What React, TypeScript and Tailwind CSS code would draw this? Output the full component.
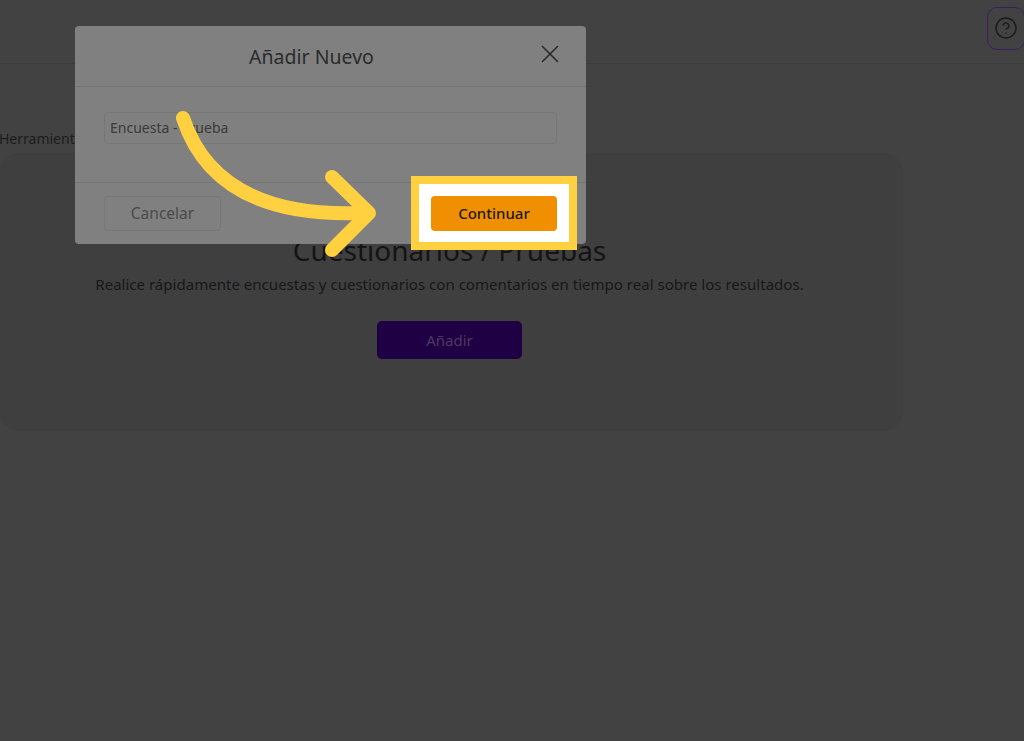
import { CircleHelp, X } from "lucide-react"

const fuente = "font-['Noto_Sans','Liberation_Sans',sans-serif]"

export default function App() {
  return (
    <div className={`relative h-[741px] w-[1024px] overflow-hidden bg-[#424242] ${fuente}`}>
      <header className="flex h-[64px] items-start justify-end border-b border-[#3c3c3c] pt-[7px]">
        <button className="-mr-px flex h-[43px] w-[38px] items-center justify-center rounded-[10px] border border-[#3c1f5a] pb-[2px] text-[#1c1c1c]">
          <CircleHelp size={24} strokeWidth={1.5} />
        </button>
      </header>

      <main className="pt-[65px]">
        <p className="-ml-px h-[24px] text-[14px] leading-[20px] text-[#1c1c1c]">Herramientas</p>
        <section className="flex h-[278px] w-[903px] flex-col items-center rounded-[20px] bg-[#3f3f3f] pr-[4px] pt-[77px]">
          <h2 className="text-[28px] leading-[40px] text-[#141414]">Cuestionarios / Pruebas</h2>
          <p className="mt-[4px] text-[15.05px] leading-[20px] text-[#171717]">
            Realice rápidamente encuestas y cuestionarios con comentarios en tiempo real sobre los resultados.
          </p>
          <button className="mt-[27px] h-[38px] w-[145px] rounded-[5px] bg-[#200044] text-[15px] text-[#4b3a5e]">Añadir</button>
        </section>
      </main>

      {/* modal */}
      <div className="absolute left-[75px] top-[26px] flex h-[218px] w-[511px] flex-col rounded-[4px] bg-[#808080]">
        <div className="relative flex h-[61px] items-center justify-center border-b border-[#767676] pr-[38px] pt-px">
          <h3 className="text-[19.5px] text-[#2b2b2b]">Añadir Nuevo</h3>
          <X size={30} strokeWidth={1.3} className="absolute right-[21px] top-[13px] text-[#2b2b2b]" />
        </div>
        <div className="flex h-[96px] items-start border-b border-[#767676] px-[29px] pt-[25px]">
          <div className="flex h-[32px] w-full items-center rounded-[4px] border border-[#767676] px-[5px] pb-[2px] text-[14px] text-[#3a3a3a]">
            Encuesta - Prueba
          </div>
        </div>
        <div className="flex flex-1 items-start justify-between px-[29px] pt-[13px]">
          <button className="h-[35px] w-[117px] rounded-[4px] border border-[#767676] text-[15.5px] text-[#4a4a4a]">Cancelar</button>
        </div>
      </div>

      {/* resaltado del botón */}
      <div className="absolute left-[411px] top-[176px] flex h-[74px] w-[166px] items-center justify-center border-[8px] border-[#ffd040] bg-white">
        <button className="h-[35px] w-[126px] rounded-[4px] bg-[#f09000] pt-px text-[15px] font-medium text-[#1a1a1a]">Continuar</button>
      </div>

      <svg className="absolute left-0 top-0" width="1024" height="741" viewBox="0 0 1024 741" fill="none">
        <path
          d="M183 118C205 185 265 217 363 213M332 177L369 213L332 250"
          stroke="#ffd040"
          strokeWidth="14"
          strokeLinecap="round"
          strokeLinejoin="round"
        />
      </svg>
    </div>
  )
}
